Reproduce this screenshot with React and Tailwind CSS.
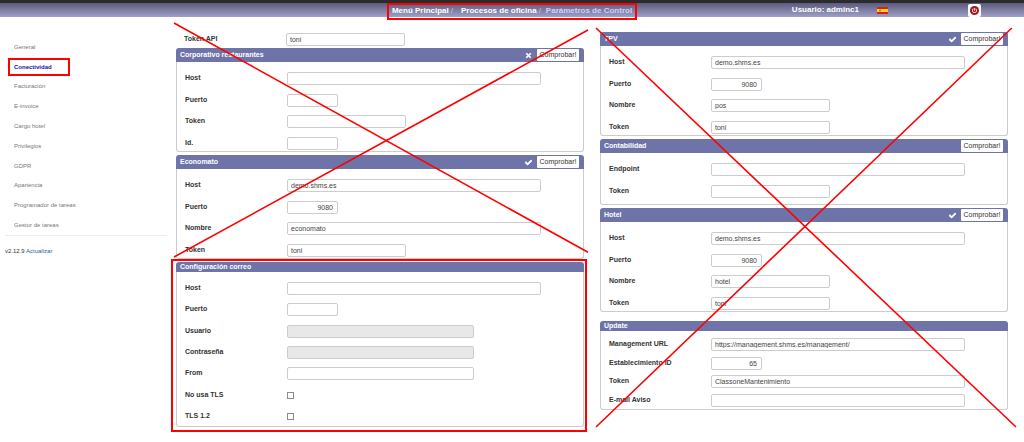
import { FaCheck, FaPowerOff, FaTimes } from 'react-icons/fa';

const menu = [
  'General',
  'Conectividad',
  'Facturación',
  'E-invoice',
  'Cargo hotel',
  'Privilegios',
  'GDPR',
  'Apariencia',
  'Programador de tareas',
  'Gestor de tareas',
];

const widths = {
  sm: 'w-[51px] pr-1 text-right',
  md: 'w-[119px]',
  lg: 'w-[187px]',
  xl: 'w-[254px]',
};

function Field({ id, label, size = 'md', value = '', type = 'text', disabled = false }) {
  return (
    <div className="flex h-[13px] items-center">
      <label htmlFor={id} className="w-[102px] shrink-0 pb-px font-bold text-[#333333]">
        {label}
      </label>
      {type === 'checkbox' ? (
        <input
          id={id}
          type="checkbox"
          className="size-[7px] appearance-none border border-[#8a8a8a] bg-white checked:bg-[#6e74a8]"
        />
      ) : (
        <input
          id={id}
          type={type}
          defaultValue={value}
          disabled={disabled}
          className={`h-[13px] rounded-[2px] border border-[#cccccc] bg-white pl-[3px] text-[#444444] disabled:bg-[#e8e8e8] ${widths[size]}`}
        />
      )}
    </div>
  );
}

function Panel({ title, status, check = false, body, children }) {
  return (
    <section className="rounded-[3px] bg-white">
      <header
        className={`flex items-center rounded-t-[3px] bg-[#6e74a8] pl-1 pr-[5px] text-white ${check ? 'h-[14px]' : 'h-[10px]'}`}
      >
        <h2 className="flex-1 font-bold">{title}</h2>
        {status === 'ok' && <FaCheck className="mr-[5px] size-[7px] stroke-white stroke-[50px]" />}
        {status === 'error' && <FaTimes className="mr-[5px] size-[7px] stroke-white stroke-[40px]" />}
        {check && (
          <button type="button" className="h-[12px] w-[42px] rounded-[1px] bg-white text-center text-[#333333]">
            Comprobar!
          </button>
        )}
      </header>
      <div
        className={`flex flex-col justify-between rounded-b-[3px] border border-t-0 border-[#cccccc] pl-2 ${body}`}
      >
        {children}
      </div>
    </section>
  );
}

function Flag() {
  return (
    <svg viewBox="0 0 22 14" className="h-[7px] w-[11px]" role="img" aria-label="Español">
      <rect width="22" height="14" fill="#d8201c" />
      <rect y="4" width="22" height="6" fill="#ffd21a" />
      <rect x="4" y="5" width="4" height="4" fill="#c8862a" />
    </svg>
  );
}

function Topbar() {
  return (
    <header className="border-t-[3px] border-[#2b2b2b]">
      <div className="grid h-[14px] grid-cols-[1fr_auto_1fr] bg-linear-to-b from-[#5c5b7e] to-[#a09fc6] text-[8px] font-bold text-white">
        <nav
          aria-label="Ruta"
          className="col-start-2 flex h-[17px] items-center border-2 border-[#ff0000] px-[3px] pb-[2px]"
        >
          <a href="#menu">Menú Principal</a>
          <span className="ml-[2px] mr-2 font-normal text-[#cccccc]">/</span>
          <a href="#procesos">Procesos de oficina</a>
          <span className="ml-[2px] mr-[5px] font-normal text-[#cccccc]">/</span>
          <span className="text-[#d0d0f8]">Parámetros de Control</span>
        </nav>
        <div className="flex items-center justify-end pr-[43px] pb-[2px]">
          <span className="mr-[18px] pb-[2px]">Usuario: adminc1</span>
          <Flag />
          <button
            type="button"
            aria-label="Salir"
            className="ml-20 flex size-[13px] items-center justify-center rounded-[2px] bg-white"
          >
            <span className="flex size-[9px] items-center justify-center rounded-full bg-[#a31621]">
              <FaPowerOff className="size-[5px] text-white" />
            </span>
          </button>
        </div>
      </div>
    </header>
  );
}

function Sidebar() {
  return (
    <aside className="w-[176px] shrink-0 pt-5 pl-[5px] pr-[9px] text-[6px]">
      <ul className="grid min-h-[199px] auto-rows-fr items-center border-b border-[#eeeeee] pl-[3px]">
        {menu.map((item) => (
          <li key={item} className="flex">
            <a
              href="#"
              className={
                item === 'Conectividad'
                  ? 'flex h-[18px] items-center border-2 border-[#ff0000] pl-1 pr-4 font-bold text-[#1a0dab]'
                  : 'flex h-[18px] items-center border-2 border-transparent pl-1 pr-4 text-[#777777]'
              }
            >
              {item}
            </a>
          </li>
        ))}
      </ul>
      <p className="mt-[11px] text-[#333333]">
        v2.12.9 <a href="#actualizar" className="text-[#23639f]">Actualizar</a>
      </p>
    </aside>
  );
}

export default function App() {
  return (
    <div className="min-h-screen bg-white font-['Liberation_Sans',Arial,sans-serif] text-[7px] leading-[8px]">
      <Topbar />
      <div className="flex pr-4">
        <Sidebar />
        <main className="grid flex-1 grid-cols-2 items-start gap-4 pt-[15px] pb-3">
          <div className="flex flex-col gap-[3px] pt-px">
            <div className="relative flex flex-col gap-[3px]">
              <div className="-mb-px pl-2">
                <Field id="token-api" label="Token API" value="toni" />
              </div>
              <Panel title="Corporativo restaurantes" status="error" check body="min-h-[90px] pt-[10px] pb-px">
                <Field id="corp-host" label="Host" size="xl" />
                <Field id="corp-puerto" label="Puerto" size="sm" />
                <Field id="corp-token" label="Token" />
                <Field id="corp-id" label="Id." size="sm" />
              </Panel>
              <Panel title="Economato" status="ok" check body="min-h-[90px] pt-[10px] pb-px">
                <Field id="eco-host" label="Host" size="xl" value="demo.shms.es" />
                <Field id="eco-puerto" label="Puerto" size="sm" value="9080" />
                <Field id="eco-nombre" label="Nombre" size="xl" value="economato" />
                <Field id="eco-token" label="Token" value="toni" />
              </Panel>
              <div className="pointer-events-none absolute -top-[10px] -right-1 bottom-[2px] -left-[2px]">
                <svg className="size-full overflow-visible" stroke="#ff0000" strokeWidth="1.6">
                  <line x1="0" y1="0" x2="100%" y2="98%" />
                  <line x1="100%" y1="3%" x2="0" y2="100%" />
                </svg>
              </div>
            </div>
            <div className="relative">
              <Panel title="Configuración correo" body="min-h-[155px] pt-[10px] pb-[3px]">
                <Field id="mail-host" label="Host" size="xl" />
                <Field id="mail-puerto" label="Puerto" size="sm" />
                <Field id="mail-usuario" label="Usuario" size="lg" disabled />
                <Field id="mail-pass" label="Contraseña" type="password" size="lg" disabled />
                <Field id="mail-from" label="From" size="lg" />
                <Field id="mail-notls" label="No usa TLS" type="checkbox" />
                <Field id="mail-tls12" label="TLS 1.2" type="checkbox" />
              </Panel>
              <div className="pointer-events-none absolute -top-[3px] -right-[3px] -bottom-[5px] -left-[5px] border-2 border-[#ff0000]" />
            </div>
          </div>

          <div className="relative flex flex-col gap-[3px]">
            <Panel title="TPV" status="ok" check body="min-h-[90px] pt-[10px] pb-px">
              <Field id="tpv-host" label="Host" size="xl" value="demo.shms.es" />
              <Field id="tpv-puerto" label="Puerto" size="sm" value="9080" />
              <Field id="tpv-nombre" label="Nombre" value="pos" />
              <Field id="tpv-token" label="Token" value="toni" />
            </Panel>
            <Panel title="Contabilidad" check body="min-h-[52px] pt-[10px] pb-[6px]">
              <Field id="cont-endpoint" label="Endpoint" size="xl" />
              <Field id="cont-token" label="Token" />
            </Panel>
            <Panel title="Hotel" status="ok" check body="min-h-[90px] pt-[10px] pb-px">
              <Field id="hotel-host" label="Host" size="xl" value="demo.shms.es" />
              <Field id="hotel-puerto" label="Puerto" size="sm" value="9080" />
              <Field id="hotel-nombre" label="Nombre" value="hotel" />
              <Field id="hotel-token" label="Token" value="toni" />
            </Panel>
            <div className="pt-[6px]">
              <Panel title="Update" body="min-h-[79px] pt-[7px] pb-[2px]">
                <Field id="upd-url" label="Management URL" size="xl" value="https://management.shms.es/management/" />
                <Field id="upd-id" label="Establecimiento ID" size="sm" value="65" />
                <Field id="upd-token" label="Token" size="xl" value="ClassoneMantenimiento" />
                <Field id="upd-email" label="E-mail Aviso" size="xl" />
              </Panel>
            </div>
            <div className="pointer-events-none absolute -top-1 -right-2 -bottom-[17px] -left-1">
              <svg className="size-full overflow-visible" stroke="#ff0000" strokeWidth="1.6">
                <line x1="0" y1="0" x2="100%" y2="100%" />
                <line x1="0" y1="100%" x2="99%" y2="0" />
              </svg>
            </div>
          </div>
        </main>
      </div>
    </div>
  );
}
